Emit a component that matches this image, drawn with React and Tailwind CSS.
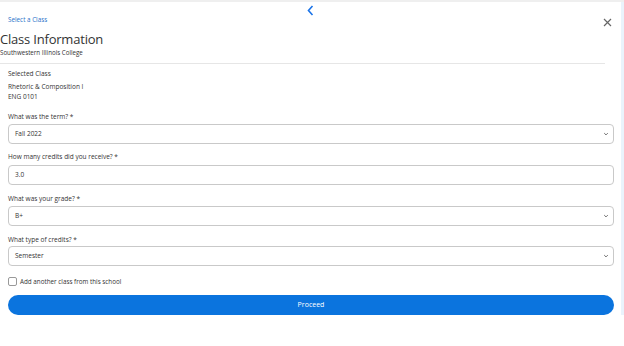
import React from "react";

function Chevron() {
  return (
    <svg width="6" height="6" viewBox="0 0 10 10" className="shrink-0">
      <path d="M2 3.5 L5 6.5 L8 3.5" fill="none" stroke="#555" strokeWidth="1.4" />
    </svg>
  );
}

function Label({ children, className = "" }) {
  return <div className={"h-[8px] leading-[8px] text-[6.5px] text-[#333] " + className}>{children}</div>;
}

function SelectBox({ value, className = "" }) {
  return (
    <div className={"h-[20px] rounded-[4px] border border-[#c9c9c9] flex items-center justify-between pl-[6px] pr-[4px] " + className}>
      <span className="text-[6.5px] text-[#333]">{value}</span>
      <Chevron />
    </div>
  );
}

export default function App() {
  return (
    <div className="h-[346px] w-full bg-white font-['Open_Sans',sans-serif] text-[#333] overflow-hidden">
      <div className="h-[2px] bg-[#efefef]" />
      <div className="flex">
        <div className="flex-1">
          {/* back arrow */}
          <div className="h-[14px] flex justify-center items-end">
            <svg width="7" height="11" viewBox="0 0 7 11">
              <path d="M5.5 1 L1.5 5.5 L5.5 10" fill="none" stroke="#1a73e8" strokeWidth="1.6" />
            </svg>
          </div>

          {/* header */}
          <div className="flex justify-between pr-[9px]">
            <div>
              <div className="h-[8px] leading-[8px] text-[6.3px] text-[#2a72c9] pl-[8px]">Select a Class</div>
              <h1 className="mt-[8px] h-[14px] leading-[14px] text-[13px] tracking-[-0.2px] text-[#333]">Class Information</h1>
              <div className="mt-[3px] h-[7px] leading-[7px] text-[6.2px] text-[#333]">Southwestern Illinois College</div>
            </div>
            <svg width="9" height="9" viewBox="0 0 9 9" className="mt-[2px]">
              <path d="M1 1 L8 8 M8 1 L1 8" stroke="#666" strokeWidth="1.2" />
            </svg>
          </div>
          <div className="mt-[7px] mr-[16px] h-px bg-[#e6e6e6]" />

          {/* form */}
          <div className="pl-[8px] pr-[7px]">
            <Label className="mt-[6px]">Selected Class</Label>
            <Label className="mt-[5px]">Rhetoric &amp; Composition I</Label>
            <Label className="mt-[2px]">ENG 0101</Label>

            <Label className="mt-[12px]">What was the term? *</Label>
            <SelectBox value="Fall 2022" className="mt-[3px]" />

            <Label className="mt-[9px]">How many credits did you receive? *</Label>
            <div className="mt-[4px] h-[20px] rounded-[4px] border border-[#c9c9c9] flex items-center pl-[6px]">
              <span className="text-[6.5px] text-[#333]">3.0</span>
            </div>

            <Label className="mt-[10px]">What was your grade? *</Label>
            <SelectBox value="B+" className="mt-[3px]" />

            <Label className="mt-[10px]">What type of credits? *</Label>
            <SelectBox value="Semester" className="mt-[2px]" />

            <div className="mt-[11px] flex items-center gap-[3px]">
              <div className="w-[9px] h-[9px] rounded-[2px] border border-[#999] bg-white" />
              <span className="text-[6.3px] leading-[9px] text-[#333]">Add another class from this school</span>
            </div>

            <button className="mt-[9px] w-full h-[20px] rounded-full bg-[#0b74de] text-white text-[7px] flex items-center justify-center">
              Proceed
            </button>
          </div>
        </div>
        <div className="w-[3px] h-[313px] bg-[#eaf3fc]" />
      </div>
    </div>
  );
}
